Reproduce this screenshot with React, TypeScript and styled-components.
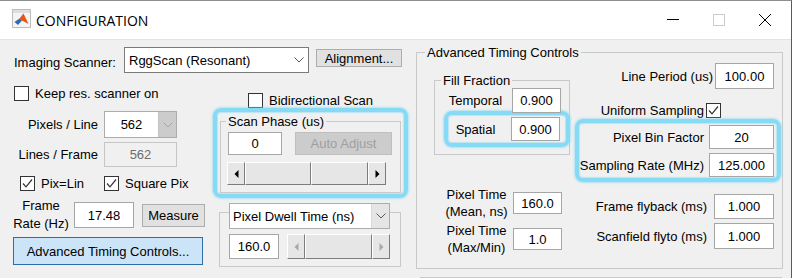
import React from 'react';
import styled, { createGlobalStyle } from 'styled-components';

const Global = createGlobalStyle`
  html, body { margin: 0; padding: 0; background: #ffffff; }
  body { font-family: "Liberation Sans", Arial, sans-serif; font-size: 13px; color: #000; }
  * { box-sizing: border-box; }
`;

const Window = styled.div`
  width: 792px;
  height: 278px;
  border-top: 1px solid #8e8e8e;
  border-right: 1px solid #5a5a5a;
  display: flex;
  flex-direction: column;
  overflow: hidden;
  background: #f0f0f0;
`;

const TitleBar = styled.div`
  height: 39px;
  flex: none;
  background: #ffffff;
  border-bottom: 1px solid #e3e3e3;
  display: flex;
  align-items: center;
`;

const AppIcon = styled.svg`
  margin-left: 12px;
  margin-top: -3px;
  flex: none;
`;

const TitleText = styled.span`
  margin-left: 5px;
  font-family: "Open Sans", "Liberation Sans", sans-serif;
  font-size: 14px;
  color: #000;
  margin-top: 0px;
`;

const Caption = styled.div`
  margin-left: auto;
  margin-right: 3px;
  display: flex;
  height: 100%;
`;

const CaptionBtn = styled.div`
  width: 46px;
  height: 100%;
  display: flex;
  align-items: center;
  justify-content: center;
`;

const Content = styled.div`
  flex: 1;
  display: flex;
  min-height: 0;
`;

const LeftBlock = styled.div`
  width: 416px;
  flex: none;
  padding-left: 13px;
  display: flex;
  flex-direction: column;
`;

const TopRow = styled.div`
  display: flex;
  align-items: flex-start;
  margin-top: 7px;
`;

const Text = styled.span<{ $w?: number; $align?: string; $lh?: number; $pt?: number; $mr?: number; $ml?: number }>`
  display: inline-block;
  flex: none;
  width: ${(p) => (p.$w ? `${p.$w}px` : 'auto')};
  text-align: ${(p) => p.$align || 'left'};
  line-height: ${(p) => p.$lh || 15}px;
  padding-top: ${(p) => p.$pt || 0}px;
  margin-right: ${(p) => p.$mr || 0}px;
  margin-left: ${(p) => p.$ml || 0}px;
  white-space: nowrap;
  font-size: 13px;
`;

const Select = styled.div<{ $w: number; $h: number; $border?: string }>`
  width: ${(p) => p.$w}px;
  height: ${(p) => p.$h}px;
  flex: none;
  display: flex;
  border: 1px solid ${(p) => p.$border || '#7a7a7a'};
  background: #ffffff;
`;

const SelectText = styled.span<{ $center?: boolean; $pl?: number }>`
  flex: 1;
  display: flex;
  align-items: center;
  justify-content: ${(p) => (p.$center ? 'center' : 'flex-start')};
  padding-left: ${(p) => p.$pl ?? 3}px;
  white-space: nowrap;
  overflow: hidden;
`;

const SelectArrow = styled.span<{ $tone: 'plain' | 'gray' | 'disabled' }>`
  width: 18px;
  flex: none;
  display: flex;
  align-items: center;
  justify-content: center;
  background: ${(p) => (p.$tone === 'plain' ? '#ffffff' : p.$tone === 'gray' ? '#e5e5e5' : '#cccccc')};
  border-left: ${(p) => (p.$tone === 'plain' ? 'none' : p.$tone === 'gray' ? '1px solid #d9d9d9' : '1px solid #c4c4c4')};
`;

const Btn = styled.div<{ $w: number; $h: number; $variant?: 'default' | 'primary' | 'disabled'; $ml?: number; $mt?: number }>`
  width: ${(p) => p.$w}px;
  height: ${(p) => p.$h}px;
  flex: none;
  margin-left: ${(p) => p.$ml || 0}px;
  margin-top: ${(p) => p.$mt || 0}px;
  display: flex;
  align-items: center;
  justify-content: center;
  white-space: nowrap;
  background: ${(p) => (p.$variant === 'primary' ? '#cce4f7' : p.$variant === 'disabled' ? '#cccccc' : '#e1e1e1')};
  border: 1px solid ${(p) => (p.$variant === 'primary' ? '#2e6ea6' : p.$variant === 'disabled' ? '#bfbfbf' : '#adadad')};
  color: ${(p) => (p.$variant === 'disabled' ? '#9f9f9f' : '#000')};
`;

const Edit = styled.input<{ $w: number; $h: number; $disabled?: boolean; $ml?: number }>`
  width: ${(p) => p.$w}px;
  height: ${(p) => p.$h}px;
  flex: none;
  margin: 0 0 0 ${(p) => p.$ml || 0}px;
  padding: 0;
  border: 1px solid ${(p) => (p.$disabled ? '#c6c6c6' : '#a6a6a6')};
  background: ${(p) => (p.$disabled ? '#f0f0f0' : '#ffffff')};
  color: ${(p) => (p.$disabled ? '#6d6d6d' : '#000')};
  font: 13px "Liberation Sans", Arial, sans-serif;
  text-align: center;
  outline: none;
`;

const Row = styled.div<{ $mt?: number; $pl?: number; $mr?: number; $align?: string }>`
  display: flex;
  align-items: ${(p) => p.$align || 'center'};
  margin-top: ${(p) => p.$mt || 0}px;
  padding-left: ${(p) => p.$pl || 0}px;
  margin-right: ${(p) => p.$mr || 0}px;
`;

const Box = styled.span<{ $ml?: number }>`
  width: 15px;
  height: 15px;
  flex: none;
  margin-left: ${(p) => p.$ml || 0}px;
  border: 1px solid #333333;
  background: #ffffff;
  display: flex;
  align-items: center;
  justify-content: center;
`;

const CheckGroup = styled.div<{ $w?: number; $ml?: number }>`
  display: flex;
  align-items: center;
  width: ${(p) => (p.$w ? `${p.$w}px` : 'auto')};
  margin-left: ${(p) => p.$ml || 0}px;
  gap: 6px;
`;

const Columns = styled.div`
  display: flex;
`;

const LeftCol = styled.div`
  width: 200px;
  flex: none;
  display: flex;
  flex-direction: column;
`;

const MidCol = styled.div`
  width: 195px;
  flex: none;
  display: flex;
  flex-direction: column;
`;

const Glow = styled.div<{ $w: number; $h: number; $mt?: number; $ml?: number; $mr?: number }>`
  width: ${(p) => p.$w}px;
  height: ${(p) => p.$h}px;
  flex: none;
  margin-top: ${(p) => p.$mt || 0}px;
  margin-left: ${(p) => p.$ml || 0}px;
  margin-right: ${(p) => p.$mr || 0}px;
  border: 4px solid #86daf4;
  border-radius: 8px;
  box-shadow: 0 0 2px 1px rgba(134, 218, 244, 0.6), inset 0 0 1px 1px rgba(134, 218, 244, 0.5);
`;

const Group = styled.fieldset<{ $w: number; $h?: number; $mt?: number; $ml?: number; $pb?: number }>`
  margin: ${(p) => p.$mt || 0}px 0 0 ${(p) => p.$ml || 0}px;
  padding: 0 0 ${(p) => p.$pb || 0}px 0;
  width: ${(p) => p.$w}px;
  height: ${(p) => (p.$h ? `${p.$h}px` : 'auto')};
  min-width: 0;
  flex: none;
  border: 1px solid #c9c9c9;
`;

const Legend = styled.legend<{ $ml: number }>`
  margin-left: ${(p) => p.$ml}px;
  padding: 0 2px;
  font-size: 13px;
  line-height: 15px;
`;

const Frame = styled.div<{ $w: number; $mt?: number; $ml?: number; $pb?: number }>`
  width: ${(p) => p.$w}px;
  margin-top: ${(p) => p.$mt || 0}px;
  margin-left: ${(p) => p.$ml || 0}px;
  padding-bottom: ${(p) => p.$pb || 0}px;
  border: 1px solid #c9c9c9;
  display: flex;
  flex-direction: column;
`;

const Overlap = styled.div<{ $mt: number; $ml: number }>`
  margin-top: ${(p) => p.$mt}px;
  margin-left: ${(p) => p.$ml}px;
`;

const Scroll = styled.div<{ $w: number; $h: number; $ml?: number; $mt?: number }>`
  width: ${(p) => p.$w}px;
  height: ${(p) => p.$h}px;
  margin-left: ${(p) => p.$ml || 0}px;
  margin-top: ${(p) => p.$mt || 0}px;
  flex: none;
  display: flex;
  background: #e6e6e6;
`;

const ScrollPart = styled.div<{ $w?: number }>`
  width: ${(p) => (p.$w ? `${p.$w}px` : 'auto')};
  flex: ${(p) => (p.$w ? 'none' : '1')};
  height: 100%;
  display: flex;
  align-items: center;
  justify-content: center;
  background: #e6e6e6;
  border-top: 1px solid #ffffff;
  border-left: 1px solid #ffffff;
  border-right: 1px solid #7c7c7c;
  border-bottom: 1px solid #7c7c7c;
`;

const RightArea = styled.div`
  display: flex;
  flex-direction: column;
  flex: none;
`;

const PanelBody = styled.div`
  display: flex;
`;

const PanelLeft = styled.div`
  width: 157px;
  flex: none;
  padding-left: 17px;
  display: flex;
  flex-direction: column;
`;

const PanelRight = styled.div`
  flex: 1;
  display: flex;
  flex-direction: column;
  align-items: flex-end;
`;

const GlowRow = styled(Glow)`
  display: flex;
  align-items: center;
`;

const GlowStack = styled(Glow)`
  display: flex;
  flex-direction: column;
  align-items: flex-end;
  padding: 2px 3px 0 0;
`;

const BottomEdge = styled.div`
  margin-top: 8px;
  margin-left: 4px;
  width: 362px;
  border-top: 1px solid #c9c9c9;
`;

const Chevron = ({ color = '#5a5a5a' }: { color?: string }) => (
  <svg width="10" height="6" viewBox="0 0 10 6">
    <polyline points="0.5,0.5 5,5 9.5,0.5" fill="none" stroke={color} strokeWidth="1" />
  </svg>
);

const Tick = () => (
  <svg width="13" height="13" viewBox="0 0 13 13">
    <polyline points="2,6.5 5,9.8 11,2.5" fill="none" stroke="#333" strokeWidth="1.2" />
  </svg>
);

const Arrow = ({ dir, color = '#000' }: { dir: 'l' | 'r'; color?: string }) => (
  <svg width="5" height="8" viewBox="0 0 5 8">
    {dir === 'l' ? <polygon points="4.5,0 0.5,4 4.5,8" fill={color} /> : <polygon points="0.5,0 4.5,4 0.5,8" fill={color} />}
  </svg>
);

const Check = ({ checked, ml }: { checked?: boolean; ml?: number }) => (
  <Box $ml={ml}>{checked ? <Tick /> : null}</Box>
);

export default function App() {
  return (
    <>
      <Global />
      <Window>
        <TitleBar>
          <AppIcon width="19" height="19" viewBox="0 0 19 19">
            <rect x="0.5" y="0.5" width="18" height="18" fill="#f4f4f4" stroke="#bdbdbd" />
            <rect x="1" y="1" width="17" height="3" fill="#dedede" />
            <polygon points="2.5,13 7.5,9.5 10,11.5 6,16" fill="#2a6cb3" />
            <polygon points="7.5,9.5 11.5,4.5 16.5,15 10,11.5" fill="#e0561d" />
            <polygon points="11.5,4.5 14,9 16.5,15" fill="#f5a52a" />
          </AppIcon>
          <TitleText>CONFIGURATION</TitleText>
          <Caption>
            <CaptionBtn>
              <svg width="12" height="2" viewBox="0 0 12 2"><line x1="0" y1="0.5" x2="12" y2="0.5" stroke="#000" /></svg>
            </CaptionBtn>
            <CaptionBtn>
              <svg width="12" height="12" viewBox="0 0 12 12"><rect x="0.5" y="0.5" width="11" height="11" fill="none" stroke="#cccccc" /></svg>
            </CaptionBtn>
            <CaptionBtn>
              <svg width="12" height="12" viewBox="0 0 12 12">
                <line x1="0" y1="0" x2="12" y2="12" stroke="#000" strokeWidth="1" />
                <line x1="12" y1="0" x2="0" y2="12" stroke="#000" strokeWidth="1" />
              </svg>
            </CaptionBtn>
          </Caption>
        </TitleBar>
        <Content>
          <LeftBlock>
            <TopRow>
              <Text $w={110} $pt={8} $ml={1}>Imaging Scanner:</Text>
              <Select $w={185} $h={26}>
                <SelectText $pl={4}>RggScan (Resonant)</SelectText>
                <SelectArrow $tone="plain"><Chevron /></SelectArrow>
              </Select>
              <Btn $w={86} $h={18} $ml={7} $mt={2}>Alignment...</Btn>
            </TopRow>
            <Columns>
              <LeftCol>
                <Row $mt={13}>
                  <CheckGroup $ml={1}>
                    <Check />
                    <Text>Keep res. scanner on</Text>
                  </CheckGroup>
                </Row>
                <Row $mt={10}>
                  <Text $w={85} $align="right" $mr={6}>Pixels / Line</Text>
                  <Select $w={73} $h={27} $border="#adadad">
                    <SelectText $center $pl={0}>562</SelectText>
                    <SelectArrow $tone="disabled"><Chevron color="#a6a6a6" /></SelectArrow>
                  </Select>
                </Row>
                <Row $mt={4}>
                  <Text $w={85} $align="right" $mr={6}>Lines / Frame</Text>
                  <Edit $w={73} $h={25} $disabled readOnly value="562" />
                </Row>
                <Row $mt={9}>
                  <CheckGroup $w={84} $ml={7}>
                    <Check checked />
                    <Text>Pix=Lin</Text>
                  </CheckGroup>
                  <CheckGroup>
                    <Check checked />
                    <Text>Square Pix</Text>
                  </CheckGroup>
                </Row>
                <Row $mt={6}>
                  <Text $w={56} $align="center" $lh={18} $mr={5}>Frame<br />Rate (Hz)</Text>
                  <Edit $w={60} $h={26} readOnly value="17.48" />
                  <Btn $w={63} $h={23} $ml={8}>Measure</Btn>
                </Row>
                <Row $mt={4}>
                  <Btn $w={190} $h={28} $variant="primary">Advanced Timing Controls...</Btn>
                </Row>
              </LeftCol>
              <MidCol>
                <Row $mt={20}>
                  <CheckGroup $ml={35}>
                    <Check />
                    <Text>Bidirectional Scan</Text>
                  </CheckGroup>
                </Row>
                <Glow $w={195} $h={90}>
                  <Group $w={181} $mt={2} $ml={3} $pb={7}>
                    <Legend $ml={5}>Scan Phase (us)</Legend>
                    <Row $mt={3} $pl={7}>
                      <Edit $w={54} $h={23} readOnly value="0" />
                      <Btn $w={97} $h={23} $ml={13} $variant="disabled">Auto Adjust</Btn>
                    </Row>
                    <Scroll $w={159} $h={23} $ml={6} $mt={7}>
                      <ScrollPart $w={18}><Arrow dir="l" /></ScrollPart>
                      <ScrollPart $w={66} />
                      <ScrollPart />
                      <ScrollPart $w={18}><Arrow dir="r" /></ScrollPart>
                    </Scroll>
                  </Group>
                </Glow>
                <Frame $w={182} $mt={14} $ml={6} $pb={7}>
                  <Overlap $mt={-10} $ml={9}>
                    <Select $w={161} $h={26} $border="#adadad">
                      <SelectText $pl={3}>Pixel Dwell Time (ns)</SelectText>
                      <SelectArrow $tone="gray"><Chevron /></SelectArrow>
                    </Select>
                  </Overlap>
                  <Row $mt={5} $pl={9}>
                    <Edit $w={50} $h={25} readOnly value="160.0" />
                    <Scroll $w={103} $h={25} $ml={8}>
                      <ScrollPart $w={18}><Arrow dir="l" color="#a8a8a8" /></ScrollPart>
                      <ScrollPart />
                      <ScrollPart $w={18}><Arrow dir="r" color="#a8a8a8" /></ScrollPart>
                    </Scroll>
                  </Row>
                </Frame>
              </MidCol>
            </Columns>
          </LeftBlock>
          <RightArea>
            <Group $w={367} $h={224} $mt={5}>
              <Legend $ml={8}>Advanced Timing Controls</Legend>
              <PanelBody>
                <PanelLeft>
                  <Group $w={136} $mt={13} $pb={7}>
                    <Legend $ml={6}>Fill Fraction</Legend>
                    <Row $pl={10}>
                      <Text $w={61} $align="center" $mr={6}>Temporal</Text>
                      <Edit $w={49} $h={25} readOnly value="0.900" />
                    </Row>
                    <GlowRow $w={126} $h={36} $mt={-2} $ml={9}>
                      <Text $w={55} $align="center" $mr={8}>Spatial</Text>
                      <Edit $w={49} $h={24} readOnly value="0.900" />
                    </GlowRow>
                  </Group>
                  <Row $mt={31} $pl={10}>
                    <Text $w={65} $align="center" $lh={17} $mr={4}>Pixel Time<br />(Mean, ns)</Text>
                    <Edit $w={49} $h={22} readOnly value="160.0" />
                  </Row>
                  <Row $mt={2} $pl={10}>
                    <Text $w={65} $align="center" $lh={17} $mr={4}>Pixel Time<br />(Max/Min)</Text>
                    <Edit $w={49} $h={22} readOnly value="1.0" />
                  </Row>
                </PanelLeft>
                <PanelRight>
                  <Row $mt={3} $mr={8}>
                    <Text $mr={2}>Line Period (us)</Text>
                    <Edit $w={59} $h={26} readOnly value="100.00" />
                  </Row>
                  <Row $mt={14} $mr={61}>
                    <Text $mr={2}>Uniform Sampling</Text>
                    <Check checked />
                  </Row>
                  <GlowStack $w={206} $h={63} $mt={1} $mr={1}>
                    <Row>
                      <Text $mr={5}>Pixel Bin Factor</Text>
                      <Edit $w={65} $h={24} readOnly value="20" />
                    </Row>
                    <Row $mt={4}>
                      <Text $mr={5}>Sampling Rate (MHz)</Text>
                      <Edit $w={65} $h={24} readOnly value="125.000" />
                    </Row>
                  </GlowStack>
                  <Row $mt={12} $mr={8}>
                    <Text $mr={7}>Frame flyback (ms)</Text>
                    <Edit $w={60} $h={25} readOnly value="1.000" />
                  </Row>
                  <Row $mt={4} $mr={8}>
                    <Text $mr={7}>Scanfield flyto (ms)</Text>
                    <Edit $w={60} $h={26} readOnly value="1.000" />
                  </Row>
                </PanelRight>
              </PanelBody>
            </Group>
            <BottomEdge />
          </RightArea>
        </Content>
      </Window>
    </>
  );
}
